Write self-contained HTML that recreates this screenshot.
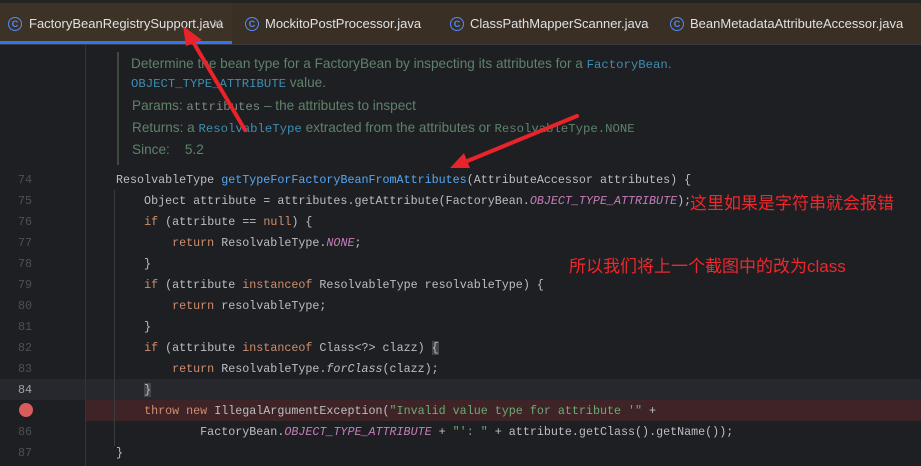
<!DOCTYPE html>
<html><head><meta charset="utf-8"><style>
body{margin:0;width:921px;height:466px;background:#1e1f22;overflow:hidden;position:relative;font-family:"Liberation Mono",monospace}
.tabs{position:absolute;left:0;top:0;width:921px;height:44px;background:#3a2f24;border-top:3px solid #232323;box-sizing:border-box}
.tab{position:absolute;top:0;height:41px;font:13px "Liberation Sans",sans-serif;line-height:41px;color:#dfe1e5}
.ic{position:absolute;top:14px;width:12px;height:12px;border:1.5px solid #548af7;border-radius:50%;font:bold 9px "Liberation Sans";line-height:12px;color:#548af7;text-align:center}
.sep{position:absolute;left:0;top:44px;width:921px;height:1px;background:#393b40}
.gut{position:absolute;left:0;top:45px;width:85px;height:421px;border-right:1px solid #313438}
.ln{position:absolute;width:32px;text-align:right;color:#4b5059;font-size:11.7px;left:0}
.code{position:absolute;left:116px;font-size:11.7px;color:#bcbec4;white-space:pre;line-height:21px}
.k{color:#cf8e6d}.f{color:#56a8f5}.c{color:#c77dbb;font-style:italic}.s{color:#6aab73}
.doc{position:absolute;left:131px;font:13.6px "Liberation Sans",sans-serif;color:#5f826b;white-space:pre}
.dm{font-family:"Liberation Mono",monospace;font-size:12.3px;color:#3d8eb0}
.note{position:absolute;color:#f0272c;font:17px "Liberation Sans","Noto Sans CJK SC",sans-serif}
</style></head><body>
<div class="tabs">
<div style="position:absolute;left:0;top:0;width:232px;height:41px;background:#3d3226"></div>
<div style="position:absolute;left:0;top:38px;width:232px;height:3px;background:#3574f0"></div>
<div class="ic" style="left:8px">C</div><div class="tab" style="left:29px">FactoryBeanRegistrySupport.java</div><div class="tab" style="left:212px;color:#888">✕</div>
<div class="ic" style="left:245px">C</div><div class="tab" style="left:265px">MockitoPostProcessor.java</div>
<div class="ic" style="left:450px">C</div><div class="tab" style="left:470px">ClassPathMapperScanner.java</div>
<div class="ic" style="left:670px">C</div><div class="tab" style="left:690px">BeanMetadataAttributeAccessor.java</div>
</div>
<div class="sep"></div>
<div style="position:absolute;left:0;top:379px;width:921px;height:21px;background:#26282e"></div>
<div style="position:absolute;left:86px;top:400px;width:835px;height:21px;background:#3f2427"></div>
<div class="gut"></div>
<div style="position:absolute;left:117px;top:52px;width:2px;height:113px;background:#3d4a3f"></div>
<div class="doc" style="top:56px">Determine the bean type for a FactoryBean by inspecting its attributes for a <span class="dm">FactoryBean</span>.</div>
<div class="doc" style="top:75px"><span class="dm">OBJECT_TYPE_ATTRIBUTE</span> value.</div>
<div class="doc" style="top:98px;left:132px">Params: <span class="dm" style="color:#7a8a7f">attributes</span> – the attributes to inspect</div>
<div class="doc" style="top:120px;left:132px">Returns: a <span class="dm">ResolvableType</span> extracted from the attributes or <span class="dm" style="color:#5f826b">ResolvableType.NONE</span></div>
<div class="doc" style="top:142px;left:132px">Since:    5.2</div>
<div style="position:absolute;left:0;top:170px;font-size:11.7px;line-height:21px">
<div class="ln" style="position:relative">74</div><div class="ln" style="position:relative">75</div><div class="ln" style="position:relative">76</div><div class="ln" style="position:relative">77</div><div class="ln" style="position:relative">78</div><div class="ln" style="position:relative">79</div><div class="ln" style="position:relative">80</div><div class="ln" style="position:relative">81</div><div class="ln" style="position:relative">82</div><div class="ln" style="position:relative">83</div><div class="ln" style="position:relative;color:#a1a3ab">84</div><div class="ln" style="position:relative;visibility:hidden">85</div><div class="ln" style="position:relative">86</div><div class="ln" style="position:relative">87</div>
</div>
<div style="position:absolute;left:19px;top:403px;width:14px;height:14px;border-radius:50%;background:#db5c5c"></div>
<div style="position:absolute;left:114px;top:190px;width:1px;height:256px;background:#393b40"></div>
<div class="code" style="top:170px">ResolvableType <span class="f">getTypeForFactoryBeanFromAttributes</span>(AttributeAccessor attributes) {
    Object attribute = attributes.getAttribute(FactoryBean.<span class="c">OBJECT_TYPE_ATTRIBUTE</span>);
    <span class="k">if</span> (attribute == <span class="k">null</span>) {
        <span class="k">return</span> ResolvableType.<span class="c">NONE</span>;
    }
    <span class="k">if</span> (attribute <span class="k">instanceof</span> ResolvableType resolvableType) {
        <span class="k">return</span> resolvableType;
    }
    <span class="k">if</span> (attribute <span class="k">instanceof</span> Class&lt;?&gt; clazz) <span style="background:#43454a">{</span>
        <span class="k">return</span> ResolvableType.<span style="font-style:italic">forClass</span>(clazz);
    <span style="background:#43454a">}</span>
    <span class="k">throw new</span> IllegalArgumentException(<span class="s">"Invalid value type for attribute '"</span> +
            FactoryBean.<span class="c">OBJECT_TYPE_ATTRIBUTE</span> + <span class="s">"': "</span> + attribute.getClass().getName());
}</div>
<div class="note" style="left:690px;top:189px">这里如果是字符串就会报错</div>
<div class="note" style="left:569px;top:252px">所以我们将上一个截图中的改为class</div>
<svg style="position:absolute;left:0;top:0" width="921" height="466">
<line x1="245" y1="130" x2="192" y2="40" stroke="#e8232a" stroke-width="4" stroke-linecap="round"/>
<polygon points="183,26 202,40 186,46" fill="#e8232a"/>
<line x1="577" y1="116" x2="465" y2="162" stroke="#e8232a" stroke-width="4" stroke-linecap="round"/>
<polygon points="450,168 464,153 470,168" fill="#e8232a"/>
</svg>
</body></html>
